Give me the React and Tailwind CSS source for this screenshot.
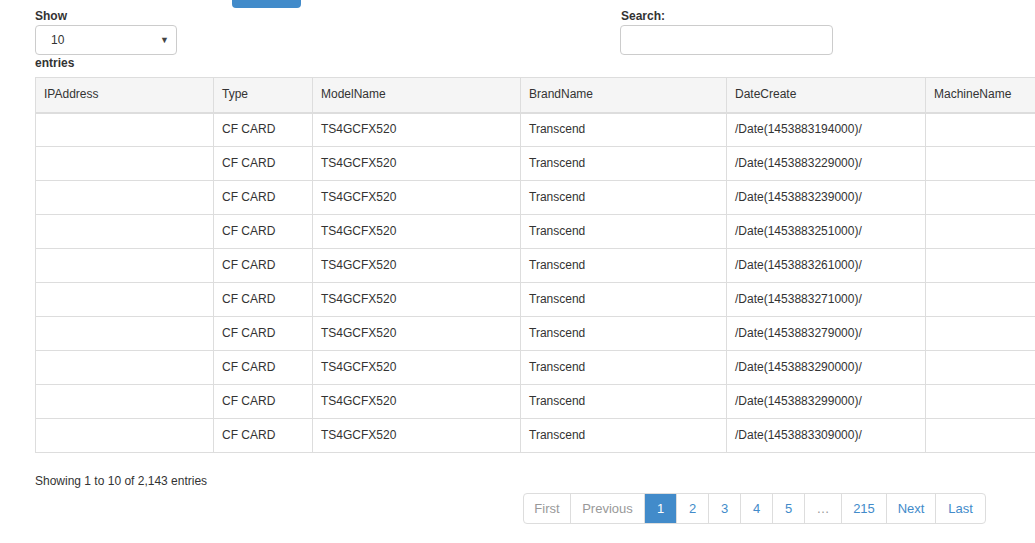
const columns = [
    { name: "IPAddress", width: "w-[178px]" },
    { name: "Type", width: "w-[99px]" },
    { name: "ModelName", width: "w-[208px]" },
    { name: "BrandName", width: "w-[206px]" },
    { name: "DateCreate", width: "w-[199px]" },
    { name: "MachineName", width: "w-[160px]" },
];

const dates = [
    "1453883194000",
    "1453883229000",
    "1453883239000",
    "1453883251000",
    "1453883261000",
    "1453883271000",
    "1453883279000",
    "1453883290000",
    "1453883299000",
    "1453883309000",
];

const pages = [
    { label: "First", width: "w-[48px]", disabled: true },
    { label: "Previous", width: "w-[75px]", disabled: true },
    { label: "1", width: "w-[33px]", active: true },
    { label: "2", width: "w-[33px]" },
    { label: "3", width: "w-[33px]" },
    { label: "4", width: "w-[33px]" },
    { label: "5", width: "w-[33px]" },
    { label: "…", width: "w-[38px]", disabled: true },
    { label: "215", width: "w-[46px]" },
    { label: "Next", width: "w-[50px]" },
    { label: "Last", width: "w-[51px]" },
];

const App = () => {
    return (
        <div className="w-[1035px] h-[543px] overflow-hidden bg-white pl-[35px] text-[12px] leading-[17px] text-[#333] font-['Liberation_Sans',Arial,sans-serif]">
            {/* cut-off button at the very top */}
            <div className="ml-[197px] w-[69px] h-[8px] bg-[#428bca] rounded-b-[4px]"></div>

            {/* Length + search controls */}
            <div className="flex">
                <div className="w-[585px]">
                    <div className="font-bold">Show</div>
                    <div className="w-[142px] h-[30px] border border-[#ccc] rounded-[4px] flex items-center justify-between pl-[15px] pr-[7px]">
                        <span>10</span>
                        <span className="text-[9px] text-[#444]">▼</span>
                    </div>
                    <div className="font-bold">entries</div>
                </div>
                <div>
                    <div className="font-bold pl-[1px]">Search:</div>
                    <div className="w-[213px] h-[30px] border border-[#ccc] rounded-[4px]"></div>
                </div>
            </div>

            {/* Table */}
            <table className="mt-[5px] border-collapse table-fixed w-[1050px]">
                <thead>
                    <tr className="bg-[#f5f5f5]">
                        {columns.map((c) => (
                            <th
                                key={c.name}
                                className={`${c.width} h-[35px] px-[8px] text-left font-normal border border-[#ddd] border-b-2`}
                            >
                                {c.name}
                            </th>
                        ))}
                    </tr>
                </thead>
                <tbody>
                    {dates.map((d) => (
                        <tr key={d}>
                            <td className="h-[34px] px-[8px] border border-[#ddd]"></td>
                            <td className="h-[34px] px-[8px] border border-[#ddd]">CF CARD</td>
                            <td className="h-[34px] px-[8px] border border-[#ddd]">TS4GCFX520</td>
                            <td className="h-[34px] px-[8px] border border-[#ddd]">Transcend</td>
                            <td className="h-[34px] px-[8px] border border-[#ddd]">/Date({d})/</td>
                            <td className="h-[34px] px-[8px] border border-[#ddd]"></td>
                        </tr>
                    ))}
                </tbody>
            </table>

            {/* Info + pagination */}
            <div className="mt-[20px]">Showing 1 to 10 of 2,143 entries</div>
            <div className="mt-[3px] ml-[488px] flex text-[13px]">
                {pages.map((p, i) => (
                    <div
                        key={p.label}
                        className={`${p.width} h-[31px] flex items-center justify-center border border-[#ddd] ${i > 0 ? "-ml-px" : ""} ${i === 0 ? "rounded-l-[4px]" : ""} ${i === pages.length - 1 ? "rounded-r-[4px]" : ""} ${p.active ? "bg-[#428bca] border-[#428bca] text-white relative" : p.disabled ? "text-[#999]" : "text-[#428bca]"}`}
                    >
                        {p.label}
                    </div>
                ))}
            </div>
        </div>
    );
};

export default App;
